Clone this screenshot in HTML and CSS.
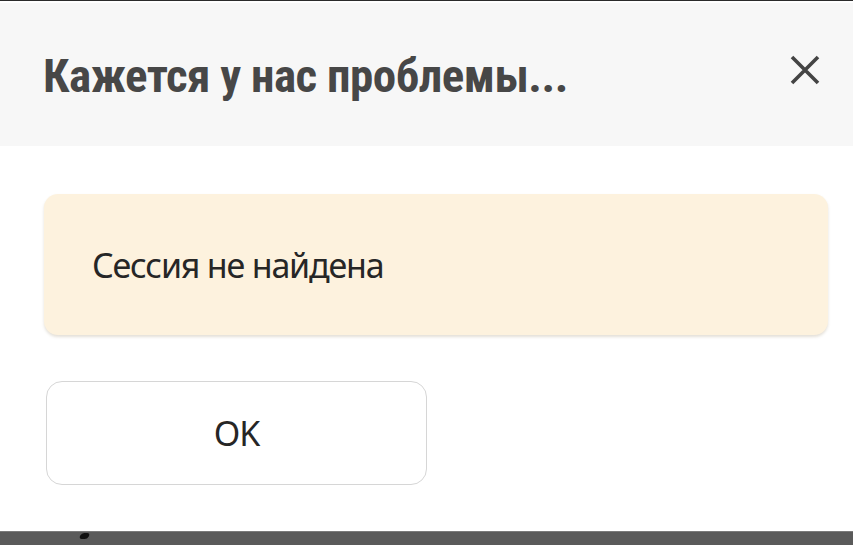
FILE: index.html
```html
<!DOCTYPE html>
<html lang="ru">
<head>
<meta charset="utf-8">
<title>Ошибка</title>
<link rel="stylesheet" href="styles.css">
</head>
<body>
<div class="page">
  <div class="topline"></div>
  <div class="modal">
    <div class="modal-header">
      <h1 class="modal-title">Кажется у нас проблемы...</h1>
      <button class="close" aria-label="Закрыть">
        <svg width="30" height="30" viewBox="0 0 30 30"><path d="M2 2 L28 28 M28 2 L2 28" stroke="#444" stroke-width="3.6" stroke-linecap="butt" fill="none"/></svg>
      </button>
    </div>
    <div class="modal-body">
      <div class="alert">Сессия не найдена</div>
      <button class="ok">OK</button>
    </div>
  </div>
  <div class="under"><span class="blob"></span></div>
</div>
</body>
</html>
```
FILE: styles.css
```css
* { box-sizing: border-box; }
html, body { margin: 0; padding: 0; background: #fff; }
.page { width: 853px; height: 545px; display: flex; flex-direction: column; overflow: hidden; }
.topline { height: 1px; background: #2b2b2b; flex: none; }
.modal { background: #fff; padding-top: 2px; flex: none; height: 530px; display: flex; flex-direction: column; }
.modal-header {
  height: 143px; background: #f7f7f7; display: flex; align-items: center;
  justify-content: space-between; padding: 0 33px 0 43px; flex: none;
}
.modal-title {
  margin: 0; font-family: "Roboto Condensed", "Roboto", sans-serif; font-stretch: condensed;
  font-weight: 700; font-size: 47px; letter-spacing: -0.5px; color: #474747; line-height: 1;
  position: relative; top: 1px;
}
.close { border: 0; background: none; padding: 0; width: 30px; height: 30px; display: block; cursor: pointer; position: relative; top: -5px; }
.close svg { display: block; }
.modal-body { padding: 48px 25px 0 44px; display: flex; flex-direction: column; align-items: flex-start; }
.alert {
  width: 100%; height: 141px; background: #fdf2de; border-radius: 14px;
  box-shadow: 0 2px 3px rgba(120, 100, 60, 0.2);
  display: flex; align-items: center; padding-left: 48px;
  font-family: "Noto Sans", sans-serif; font-size: 34px; letter-spacing: -1.2px; color: #262626;
}
.ok {
  margin: 46px 0 0 2px; width: 381px; height: 104px; background: #fff;
  border: 1.5px solid #d6d6d6; border-radius: 16px;
  font-family: "Noto Sans", sans-serif; font-size: 34px; letter-spacing: -1px; color: #262626;
  display: flex; align-items: center; justify-content: center; padding: 0;
}
.under {
  flex: 1; background: #5a5a5a; border-top: 1px solid #7a7a7a; position: relative;
}
.blob {
  position: absolute; left: 80px; top: 1px; width: 9px; height: 6px; background: #111;
  border-radius: 3px 4px 3px 4px; transform: skewX(-30deg);
}
```
